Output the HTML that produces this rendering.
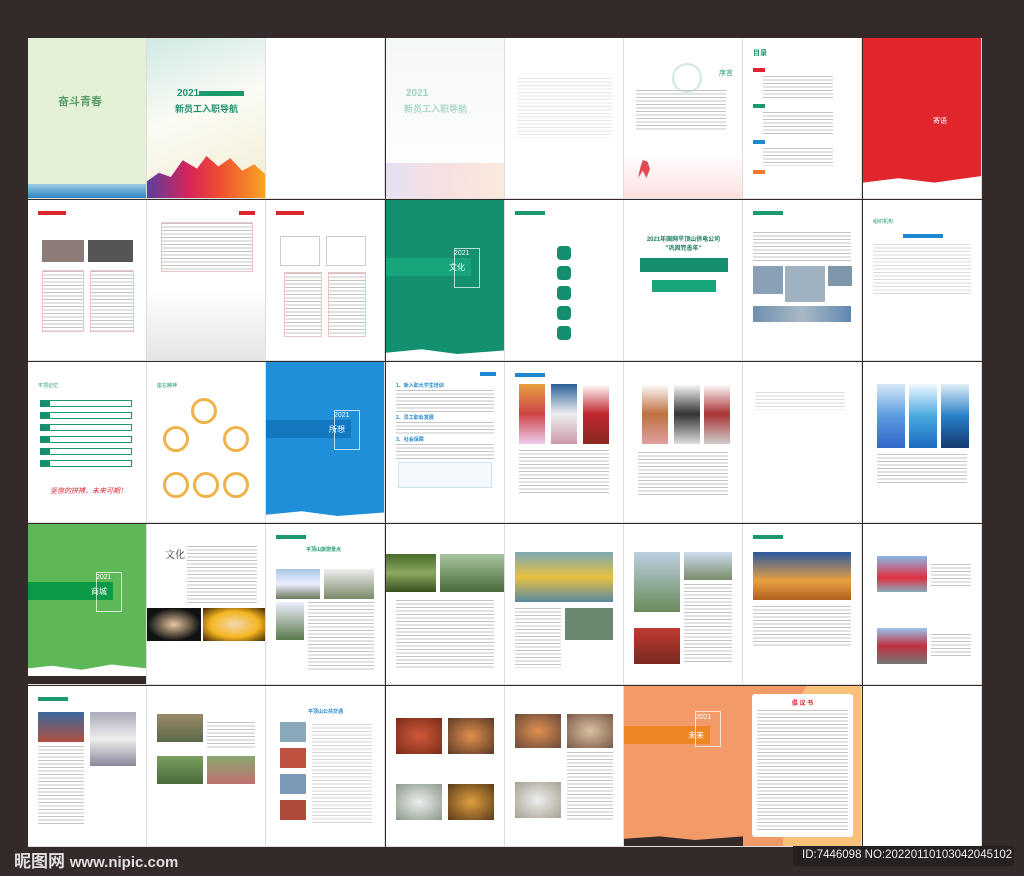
<!DOCTYPE html>
<html><head><meta charset="utf-8"><style>
*{margin:0;padding:0;box-sizing:border-box}
body{width:1024px;height:876px;background:#332a29;position:relative;overflow:hidden;font-family:"Liberation Sans","Noto Sans CJK SC",sans-serif}
.p{position:absolute;width:119px;height:161px;background:#fff;overflow:hidden;border-right:1px solid #ddd;border-bottom:1px solid #ddd}
.a{position:absolute}
.tx{position:absolute;background:repeating-linear-gradient(#c4c4c4 0 1px,transparent 1px 3.5px)}
.hd{position:absolute;top:11px;left:10px;width:28px;height:4px;background:#d9262e}
.hg{position:absolute;top:11px;left:10px;width:30px;height:4px;background:#1a9a6c}
.hb{position:absolute;top:11px;left:10px;width:30px;height:4px;background:#1e88d0}
.band{position:absolute;left:0;top:58px;width:85px;height:18px;color:#fff;font-size:8px;text-align:right;padding:4px 6px 0 0}
.frame{position:absolute;left:68px;top:48px;width:26px;height:40px;border:1px solid rgba(255,255,255,.7)}
.yr{position:absolute;left:68px;top:50px;color:#fff;font-size:7px}
</style></head><body>

<!-- ROW 0 -->
<div class="p" style="left:28px;top:38px;background:#e3f0d6">
 <div class="a" style="left:30px;top:55px;color:#5a9e6a;font-size:11px;font-weight:bold">奋斗青春</div>
 <div class="a" style="left:0;bottom:0;width:119px;height:14px;background:linear-gradient(#9ec9e0,#2c86c4)"></div>
</div>
<div class="p" style="left:147px;top:38px;background:linear-gradient(160deg,#cfe9e4,#fbfbf4 45%,#f3ecd2)">
 <div class="a" style="left:30px;top:50px;color:#1f9070;font-size:10px;font-weight:bold">2021</div>
 <div class="a" style="left:52px;top:53px;width:45px;height:5px;background:#1a9a6c"></div>
 <div class="a" style="left:28px;top:64px;color:#1f9070;font-size:9px;font-weight:bold">新员工入职导航</div>
 <div class="a" style="left:0;bottom:0;width:119px;height:42px;background:linear-gradient(90deg,#5a3fa0,#d8245a 35%,#ef4b35 60%,#f7a623);clip-path:polygon(0 60%,10% 40%,20% 50%,30% 10%,42% 30%,50% 0,60% 25%,70% 5%,80% 35%,90% 20%,100% 45%,100% 100%,0 100%)"></div>
</div>
<div class="p" style="left:266px;top:38px"></div>
<div class="p" style="left:386px;top:38px;background:linear-gradient(#f4f8f6,#fff)">
 <div class="a" style="left:20px;top:50px;color:#9fd3c0;font-size:10px;font-weight:bold">2021</div>
 <div class="a" style="left:18px;top:64px;color:#a8d8c6;font-size:9px;font-weight:bold">新员工入职导航</div>
 <div class="a" style="left:0;bottom:0;width:119px;height:35px;background:linear-gradient(90deg,#d8d4ec,#f6d2d6,#f8e2cc);opacity:.7"></div>
</div>
<div class="p" style="left:505px;top:38px">
 <div class="tx" style="left:12px;top:40px;width:95px;height:60px;opacity:.4"></div>
</div>
<div class="p" style="left:624px;top:38px">
 <div class="a" style="left:48px;top:25px;width:30px;height:30px;border:2px solid #cfe9e2;border-radius:50%"></div>
 <div class="a" style="left:95px;top:30px;color:#1a9a6c;font-size:7px">序言</div>
 <div class="tx" style="left:12px;top:52px;width:90px;height:40px"></div>
 <div class="a" style="left:0;bottom:0;width:119px;height:45px;background:linear-gradient(#fff,#fbe1e0)"></div>
 <div class="a" style="left:14px;bottom:20px;width:12px;height:18px;background:#e04a50;clip-path:polygon(40% 0,80% 10%,100% 50%,70% 100%,40% 60%,0 100%,20% 40%)"></div>
</div>
<div class="p" style="left:743px;top:38px">
 <div class="a" style="left:10px;top:10px;color:#1a9a6c;font-size:7px;font-weight:bold">目录</div>
 <div class="a" style="left:10px;top:30px;width:12px;height:4px;background:#d9262e"></div>
 <div class="tx" style="left:20px;top:38px;width:70px;height:24px"></div>
 <div class="a" style="left:10px;top:66px;width:12px;height:4px;background:#1a9a6c"></div>
 <div class="tx" style="left:20px;top:74px;width:70px;height:24px"></div>
 <div class="a" style="left:10px;top:102px;width:12px;height:4px;background:#1e88d0"></div>
 <div class="tx" style="left:20px;top:110px;width:70px;height:18px"></div>
 <div class="a" style="left:10px;top:132px;width:12px;height:4px;background:#ef7b2a"></div>
</div>
<div class="p" style="left:863px;top:38px;background:#e1262e">
 <div class="a" style="left:70px;top:78px;color:#fff;font-size:7px">寄语</div>
 <div class="a" style="left:0;bottom:0;width:119px;height:22px;background:#fff;clip-path:polygon(0 30%,30% 10%,60% 30%,100% 0,100% 100%,0 100%)"></div>
</div>

<!-- ROW 1 -->
<div class="p" style="left:28px;top:200px">
 <div class="hd"></div>
 <div class="a" style="left:14px;top:40px;width:42px;height:22px;background:#8c7b78"></div>
 <div class="a" style="left:60px;top:40px;width:45px;height:22px;background:#555"></div>
 <div class="tx" style="left:14px;top:70px;width:42px;height:62px;border:1px solid #f1c4c4"></div>
 <div class="tx" style="left:62px;top:70px;width:44px;height:62px;border:1px solid #f1c4c4"></div>
</div>
<div class="p" style="left:147px;top:200px;background:linear-gradient(#fff 55%,#e5e5e5)">
 <div class="a" style="right:10px;top:11px;width:16px;height:4px;background:#d9262e"></div>
 <div class="tx" style="left:14px;top:22px;width:92px;height:50px;border:1px solid #f1c4c4"></div>
</div>
<div class="p" style="left:266px;top:200px">
 <div class="hd"></div>
 <div class="a" style="left:14px;top:36px;width:40px;height:30px;border:1px solid #ccc"></div>
 <div class="a" style="left:60px;top:36px;width:40px;height:30px;border:1px solid #ccc"></div>
 <div class="tx" style="left:18px;top:72px;width:38px;height:65px;border:1px solid #f1c4c4"></div>
 <div class="tx" style="left:62px;top:72px;width:38px;height:65px;border:1px solid #f1c4c4"></div>
</div>
<div class="p" style="left:386px;top:200px;background:#12906f">
 <div class="band" style="background:#18a57c">文化</div>
 <div class="frame"></div><div class="yr">2021</div>
 <div class="a" style="left:0;bottom:0;width:119px;height:12px;background:#fff;clip-path:polygon(0 40%,30% 10%,60% 50%,100% 20%,100% 100%,0 100%)"></div>
</div>
<div class="p" style="left:505px;top:200px">
 <div class="hg"></div>
 <div class="a" style="left:52px;top:46px;width:14px;height:14px;background:#138f6e;border-radius:4px"></div>
 <div class="a" style="left:52px;top:66px;width:14px;height:14px;background:#138f6e;border-radius:4px"></div>
 <div class="a" style="left:52px;top:86px;width:14px;height:14px;background:#138f6e;border-radius:4px"></div>
 <div class="a" style="left:52px;top:106px;width:14px;height:14px;background:#138f6e;border-radius:4px"></div>
 <div class="a" style="left:52px;top:126px;width:14px;height:14px;background:#138f6e;border-radius:4px"></div>
</div>
<div class="p" style="left:624px;top:200px">
 <div class="a" style="left:0;top:34px;width:119px;text-align:center;color:#1a7a5e;font-size:6px;font-weight:bold">2021年国网平顶山供电公司<br>"巩固完善年"</div>
 <div class="a" style="left:16px;top:58px;width:88px;height:14px;background:#138f6e"></div>
 <div class="a" style="left:28px;top:80px;width:64px;height:12px;background:#18a57c"></div>
</div>
<div class="p" style="left:743px;top:200px">
 <div class="hg"></div>
 <div class="tx" style="left:10px;top:32px;width:98px;height:30px"></div>
 <div class="a" style="left:10px;top:66px;width:30px;height:28px;background:#8aa0b6"></div>
 <div class="a" style="left:42px;top:66px;width:40px;height:36px;background:#9fb2c2"></div>
 <div class="a" style="left:85px;top:66px;width:24px;height:20px;background:#7e96a8"></div>
 <div class="a" style="left:10px;top:106px;width:98px;height:16px;background:linear-gradient(90deg,#6e8fae,#a9b9c6,#5f88b0)"></div>
</div>
<div class="p" style="left:863px;top:200px">
 <div class="a" style="left:10px;top:18px;color:#1a9a6c;font-size:5px">组织机构</div>
 <div class="a" style="left:40px;top:34px;width:40px;height:4px;background:#1e88d0"></div>
 <div class="tx" style="left:10px;top:44px;width:98px;height:50px;opacity:.6"></div>
</div>

<!-- ROW 2 -->
<div class="p" style="left:28px;top:362px">
 <div class="a" style="left:10px;top:20px;color:#1a9a6c;font-size:5px">平顶记忆</div>
 <div class="a" style="left:12px;top:38px;width:92px;height:7px;border:1px solid #1a9a6c;border-left:10px solid #138f6e"></div>
 <div class="a" style="left:12px;top:50px;width:92px;height:7px;border:1px solid #1a9a6c;border-left:10px solid #138f6e"></div>
 <div class="a" style="left:12px;top:62px;width:92px;height:7px;border:1px solid #1a9a6c;border-left:10px solid #138f6e"></div>
 <div class="a" style="left:12px;top:74px;width:92px;height:7px;border:1px solid #1a9a6c;border-left:10px solid #138f6e"></div>
 <div class="a" style="left:12px;top:86px;width:92px;height:7px;border:1px solid #1a9a6c;border-left:10px solid #138f6e"></div>
 <div class="a" style="left:12px;top:98px;width:92px;height:7px;border:1px solid #1a9a6c;border-left:10px solid #138f6e"></div>
 <div class="a" style="left:22px;top:124px;color:#d9262e;font-size:7px;font-style:italic">坚信的拼搏，未来可期！</div>
</div>
<div class="p" style="left:147px;top:362px">
 <div class="a" style="left:10px;top:20px;color:#1a9a6c;font-size:5px">座右精神</div>
 <div class="a" style="left:44px;top:36px;width:26px;height:26px;border:3px solid #f0b24a;border-radius:50%"></div>
 <div class="a" style="left:16px;top:64px;width:26px;height:26px;border:3px solid #f0b24a;border-radius:50%"></div>
 <div class="a" style="left:76px;top:64px;width:26px;height:26px;border:3px solid #f0b24a;border-radius:50%"></div>
 <div class="a" style="left:16px;top:110px;width:26px;height:26px;border:3px solid #f0b24a;border-radius:50%"></div>
 <div class="a" style="left:46px;top:110px;width:26px;height:26px;border:3px solid #f0b24a;border-radius:50%"></div>
 <div class="a" style="left:76px;top:110px;width:26px;height:26px;border:3px solid #f0b24a;border-radius:50%"></div>
</div>
<div class="p" style="left:266px;top:362px;background:#1e8fd8">
 <div class="band" style="background:#1478c0">所想</div>
 <div class="frame"></div><div class="yr">2021</div>
 <div class="a" style="left:0;bottom:0;width:119px;height:12px;background:#fff;clip-path:polygon(0 40%,30% 10%,60% 50%,100% 20%,100% 100%,0 100%)"></div>
</div>
<div class="p" style="left:386px;top:362px">
 <div class="a" style="right:8px;top:10px;width:16px;height:4px;background:#1e88d0"></div>
 <div class="a" style="left:10px;top:20px;color:#1e88d0;font-size:5px;font-weight:bold">1、新入职大学生培训</div>
 <div class="tx" style="left:10px;top:28px;width:98px;height:22px"></div>
 <div class="a" style="left:10px;top:52px;color:#1e88d0;font-size:5px;font-weight:bold">2、员工职业发展</div>
 <div class="tx" style="left:10px;top:60px;width:98px;height:12px"></div>
 <div class="a" style="left:10px;top:74px;color:#1e88d0;font-size:5px;font-weight:bold">3、社会保障</div>
 <div class="tx" style="left:10px;top:82px;width:98px;height:16px"></div>
 <div class="a" style="left:12px;top:100px;width:94px;height:26px;border:1px solid #cfe3f2;background:#f3f9fd"></div>
</div>
<div class="p" style="left:505px;top:362px">
 <div class="hb"></div>
 <div class="a" style="left:14px;top:22px;width:26px;height:60px;background:linear-gradient(#e8a040,#c44,#ece)"></div>
 <div class="a" style="left:46px;top:22px;width:26px;height:60px;background:linear-gradient(#2a5f9a,#eee,#c9a)"></div>
 <div class="a" style="left:78px;top:22px;width:26px;height:60px;background:linear-gradient(#fff,#c0262e,#8a2a1e)"></div>
 <div class="tx" style="left:14px;top:88px;width:90px;height:45px"></div>
</div>
<div class="p" style="left:624px;top:362px">
 <div class="a" style="left:18px;top:22px;width:26px;height:60px;background:linear-gradient(#fff,#c07040,#e0a0a0)"></div>
 <div class="a" style="left:50px;top:22px;width:26px;height:60px;background:linear-gradient(#fff,#333,#ddd)"></div>
 <div class="a" style="left:80px;top:22px;width:26px;height:60px;background:linear-gradient(#fff,#a33,#ccc)"></div>
 <div class="tx" style="left:14px;top:90px;width:90px;height:45px"></div>
</div>
<div class="p" style="left:743px;top:362px">
 <div class="tx" style="left:12px;top:30px;width:90px;height:18px;opacity:.6"></div>
</div>
<div class="p" style="left:863px;top:362px">
 <div class="a" style="left:14px;top:22px;width:28px;height:64px;background:linear-gradient(#d8e8f8,#5a9be0,#36c)"></div>
 <div class="a" style="left:46px;top:22px;width:28px;height:64px;background:linear-gradient(#f0f8ff,#4aa8e0,#1a6ac0)"></div>
 <div class="a" style="left:78px;top:22px;width:28px;height:64px;background:linear-gradient(#e0eef8,#2a80c8,#163a70)"></div>
 <div class="tx" style="left:14px;top:92px;width:90px;height:30px"></div>
</div>

<!-- ROW 3 -->
<div class="p" style="left:28px;top:524px;background:#5fb858">
 <div class="band" style="background:#0d9a48">商城</div>
 <div class="frame"></div><div class="yr">2021</div>
 <div class="a" style="left:0;bottom:0;width:119px;height:26px;background:#fff;clip-path:polygon(0 40%,20% 30%,45% 45%,70% 25%,100% 40%,100% 100%,0 100%)"></div>
 <div class="a" style="left:0;bottom:0;width:119px;height:8px;background:#332a29"></div>
</div>
<div class="p" style="left:147px;top:524px">
 <div class="a" style="left:18px;top:22px;color:#333;font-size:10px;font-family:'Noto Serif CJK SC',serif">文化</div>
 <div class="tx" style="left:40px;top:22px;width:70px;height:58px"></div>
 <div class="a" style="left:0;top:84px;width:54px;height:33px;background:radial-gradient(#e8c8a0,#111 70%)"></div>
 <div class="a" style="left:56px;top:84px;width:63px;height:33px;background:radial-gradient(#f2d8b0,#f5b520 55%,#3a2205)"></div>
</div>
<div class="p" style="left:266px;top:524px">
 <div class="hg"></div>
 <div class="a" style="left:40px;top:22px;color:#1a9a6c;font-size:5px;font-weight:bold">平顶山旅游景点</div>
 <div class="a" style="left:10px;top:45px;width:44px;height:30px;background:linear-gradient(#a8c8e8,#eef,#6a7a5a)"></div>
 <div class="a" style="left:58px;top:45px;width:50px;height:30px;background:linear-gradient(#eee,#7a8a6a)"></div>
 <div class="a" style="left:10px;top:78px;width:28px;height:38px;background:linear-gradient(#eef,#5a7a4a)"></div>
 <div class="tx" style="left:42px;top:78px;width:66px;height:70px"></div>
</div>
<div class="p" style="left:386px;top:524px">
 <div class="a" style="left:0;top:30px;width:50px;height:38px;background:linear-gradient(#4a6a2a,#8aa860,#3a5020)"></div>
 <div class="a" style="left:54px;top:30px;width:65px;height:38px;background:linear-gradient(#a8c4a0,#4a6a3a)"></div>
 <div class="tx" style="left:10px;top:76px;width:98px;height:70px"></div>
</div>
<div class="p" style="left:505px;top:524px">
 <div class="a" style="left:10px;top:28px;width:98px;height:50px;background:linear-gradient(#7aa8b0,#e8c040 50%,#5a88a0)"></div>
 <div class="tx" style="left:10px;top:84px;width:46px;height:60px"></div>
 <div class="a" style="left:60px;top:84px;width:48px;height:32px;background:#6a8a70"></div>
</div>
<div class="p" style="left:624px;top:524px">
 <div class="a" style="left:10px;top:28px;width:46px;height:60px;background:linear-gradient(#bcd0e0,#6a8a5a)"></div>
 <div class="a" style="left:60px;top:28px;width:48px;height:28px;background:linear-gradient(#cde,#7a8a6a)"></div>
 <div class="a" style="left:10px;top:104px;width:46px;height:36px;background:linear-gradient(#c03a30,#7a2a20)"></div>
 <div class="tx" style="left:60px;top:60px;width:48px;height:80px"></div>
</div>
<div class="p" style="left:743px;top:524px">
 <div class="hg"></div>
 <div class="a" style="left:10px;top:28px;width:98px;height:48px;background:linear-gradient(#2a5aa0,#e8a040 60%,#b06020)"></div>
 <div class="tx" style="left:10px;top:82px;width:98px;height:40px"></div>
</div>
<div class="p" style="left:863px;top:524px">
 <div class="a" style="left:14px;top:32px;width:50px;height:36px;background:linear-gradient(#8ab8e8,#e03040 60%,#8ab)"></div>
 <div class="tx" style="left:68px;top:40px;width:40px;height:24px"></div>
 <div class="a" style="left:14px;top:104px;width:50px;height:36px;background:linear-gradient(#9ac4ee,#c03040,#777)"></div>
 <div class="tx" style="left:68px;top:110px;width:40px;height:24px"></div>
</div>

<!-- ROW 4 -->
<div class="p" style="left:28px;top:686px">
 <div class="hg"></div>
 <div class="a" style="left:10px;top:26px;width:46px;height:30px;background:linear-gradient(#3a6aa0,#b05040)"></div>
 <div class="a" style="left:62px;top:26px;width:46px;height:54px;background:linear-gradient(#aab,#eee,#889)"></div>
 <div class="tx" style="left:10px;top:60px;width:46px;height:80px"></div>
</div>
<div class="p" style="left:147px;top:686px">
 <div class="a" style="left:10px;top:28px;width:46px;height:28px;background:linear-gradient(#9a8a6a,#5a6a4a)"></div>
 <div class="a" style="left:10px;top:70px;width:46px;height:28px;background:linear-gradient(#7aa060,#4a6a3a)"></div>
 <div class="a" style="left:60px;top:70px;width:48px;height:28px;background:linear-gradient(#8aa870,#c07070)"></div>
 <div class="tx" style="left:60px;top:36px;width:48px;height:26px"></div>
</div>
<div class="p" style="left:266px;top:686px">
 <div class="a" style="left:0;top:22px;width:119px;text-align:center;color:#1e88d0;font-size:5px;font-weight:bold">平顶山公共交通</div>
 <div class="a" style="left:14px;top:36px;width:26px;height:20px;background:#8ab"></div>
 <div class="a" style="left:14px;top:62px;width:26px;height:20px;background:#c05040"></div>
 <div class="a" style="left:14px;top:88px;width:26px;height:20px;background:#7a9ab8"></div>
 <div class="a" style="left:14px;top:114px;width:26px;height:20px;background:#b04a3a"></div>
 <div class="tx" style="left:46px;top:38px;width:60px;height:100px;opacity:.7"></div>
</div>
<div class="p" style="left:386px;top:686px">
 <div class="a" style="left:10px;top:32px;width:46px;height:36px;background:radial-gradient(#d05a3a,#7a2a1a)"></div>
 <div class="a" style="left:62px;top:32px;width:46px;height:36px;background:radial-gradient(#e0904a,#5a3a2a)"></div>
 <div class="a" style="left:10px;top:98px;width:46px;height:36px;background:radial-gradient(#eee,#8a9a8a)"></div>
 <div class="a" style="left:62px;top:98px;width:46px;height:36px;background:radial-gradient(#e0a040,#5a3a1a)"></div>
</div>
<div class="p" style="left:505px;top:686px">
 <div class="a" style="left:10px;top:28px;width:46px;height:34px;background:radial-gradient(#e09050,#6a4a3a)"></div>
 <div class="a" style="left:62px;top:28px;width:46px;height:34px;background:radial-gradient(#d8c0a0,#7a5a4a)"></div>
 <div class="a" style="left:10px;top:96px;width:46px;height:36px;background:radial-gradient(#eee,#a8a090)"></div>
 <div class="tx" style="left:62px;top:66px;width:46px;height:70px"></div>
</div>
<div class="p" style="left:624px;top:686px;background:#f29b69;border-right:none">
 <div class="band" style="background:#ef8626;width:86px;top:40px">未来</div>
 <div class="a" style="left:71px;top:25px;width:26px;height:36px;border:1px solid rgba(255,255,255,.7)"></div>
 <div class="yr" style="left:72px;top:28px">2021</div>
 <div class="a" style="left:0;bottom:0;width:119px;height:12px;background:#332a29;clip-path:polygon(0 40%,30% 20%,60% 50%,100% 20%,100% 100%,0 100%)"></div>
</div>
<div class="p" style="left:743px;top:686px;background:#f29b69">
 <div class="a" style="left:40px;top:0;width:79px;height:161px;background:#f8c27a;clip-path:polygon(30% 0,100% 0,100% 100%,0 100%,0 50%,20% 8%)"></div>
 <div class="a" style="left:9px;top:8px;width:101px;height:143px;background:#fff;border-radius:3px"></div>
 <div class="a" style="left:0;top:12px;width:119px;text-align:center;color:#d9262e;font-size:6px;font-weight:bold">倡 议 书</div>
 <div class="tx" style="left:14px;top:24px;width:91px;height:122px"></div>
</div>
<div class="p" style="left:863px;top:686px"></div>

<!-- watermark -->
<div class="a" style="left:14px;top:847px;color:#fff;font-size:17px;font-weight:bold;opacity:.85;white-space:nowrap">昵图网 <span style="font-size:15px">www.nipic.com</span></div>
<div class="a" style="left:793px;top:846px;width:221px;height:20px;background:#262020"></div>
<div class="a" style="left:802px;top:849px;color:#eee;font-size:11.5px;white-space:nowrap">ID:7446098 NO:20220110103042045102</div>
</body></html>
